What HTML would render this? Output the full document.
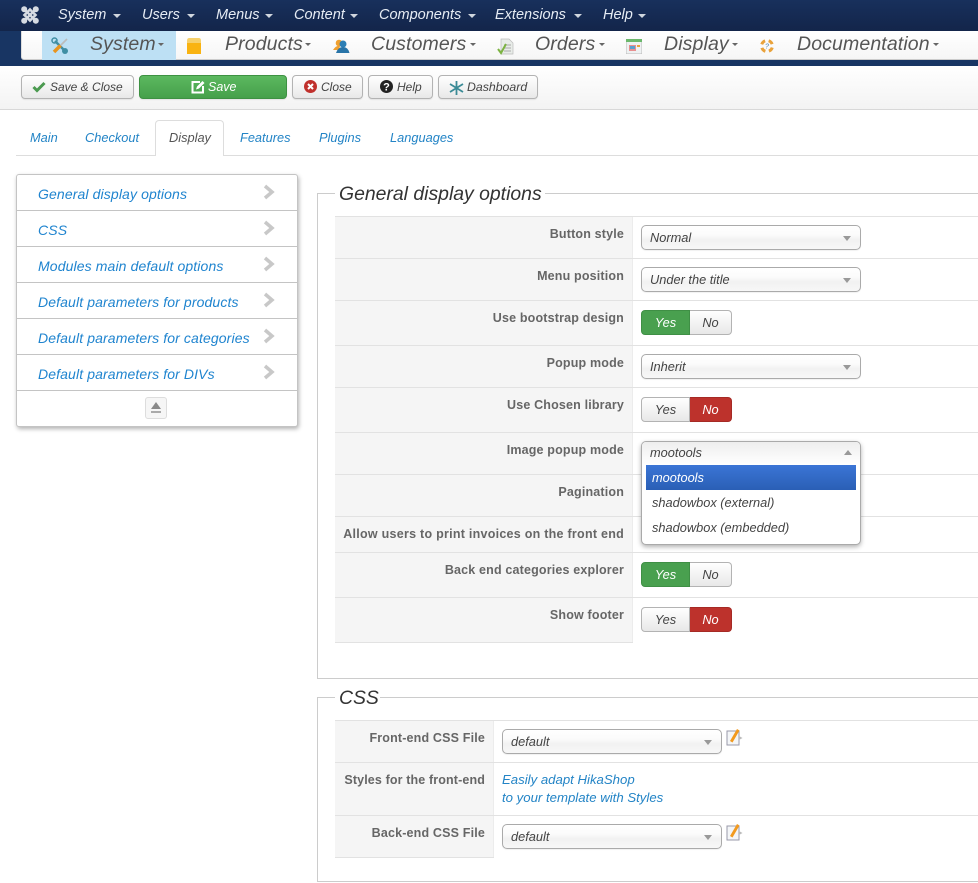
<!DOCTYPE html>
<html><head><meta charset="utf-8"><title>Display</title>
<style>
*{box-sizing:border-box}
html,body{margin:0;padding:0;background:#fff}
body{width:978px;height:883px;position:relative;overflow:hidden;font-family:"Liberation Sans",Arial,sans-serif;font-style:italic;color:#333}
.a{position:absolute;white-space:nowrap}
.tn{top:7px;font-size:14.5px;line-height:17px;color:#e6ecf4}
.car{position:absolute;width:0;height:0;border-left:4px solid transparent;border-right:4px solid transparent;border-top:4px solid #d0d6de}
.sn{top:33px;font-size:19.5px;line-height:22px;color:#555;letter-spacing:.12px}
.scar{position:absolute;top:43px;width:0;height:0;border-left:3.5px solid transparent;border-right:3.5px solid transparent;border-top:3.5px solid #666}
.btn{top:75px;height:24px;border:1px solid #b3b3b3;border-radius:4px;background:linear-gradient(#fff,#e8e8e8);font-size:12px;line-height:22px;color:#444;box-shadow:0 1px 1px rgba(0,0,0,.08)}
.tab{top:130px;font-size:12.8px;line-height:15px;color:#2384c6}
.pl{left:38px;font-size:14px;line-height:16px;color:#1f84cf;letter-spacing:.12px}
.hl{left:17px;width:280px;height:1px;background:#c4c4c4}
.lbl{background:#f5f5f5;left:335px;width:298px}
.r{left:335px;width:643px;height:1px;background:#e2e2e2}
.t{font-weight:bold;font-style:normal;font-size:12.5px;line-height:15px;color:#666;text-align:right;letter-spacing:.17px}
.sel{left:641px;width:220px;height:25px;border:1px solid #aaa;border-radius:5px;background:linear-gradient(#fff 0%,#fbfbfb 40%,#f1f1f1 60%,#f7f7f7 100%);font-size:12.8px;line-height:24px;padding-left:8px;color:#444;box-shadow:0 1px 1px rgba(0,0,0,.06)}
.sel:after{content:"";position:absolute;right:9px;top:10px;border-left:4px solid transparent;border-right:4px solid transparent;border-top:5px solid #999}
.y,.n{height:25px;top:0;font-size:12.8px;line-height:24px;text-align:center;border:1px solid #b3b3b3;position:absolute}
.tg{position:absolute;left:641px;width:91px;height:25px}
.y{left:0;width:49px;border-radius:4px 0 0 4px}
.n{left:49px;width:42px;border-radius:0 4px 4px 0;border-left:0}
.off{background:linear-gradient(#fff,#e8e8e8);color:#444}
.gr{background:#49a04f;border-color:#3f8f45;color:#fff}
.rd{background:#bd322c;border-color:#a52a25;color:#fff}
.opt{left:652px;font-size:12.8px;line-height:15px;color:#444}
</style></head><body>

<div class="a" style="left:0;top:0;width:978px;height:31px;background:linear-gradient(#18305c,#13254a)"></div>
<svg class="a" style="left:20px;top:5px" width="20" height="20" viewBox="0 0 20 20"><g fill="none" stroke="#d6dbe2" stroke-width="2.600"><path d="M4 4 L16 16"/><path d="M16 4 L4 16"/><path d="M10 4.500 L15.500 10 L10 15.500 L4.500 10Z"/></g><g fill="#d6dbe2"><circle cx="4.200" cy="4.200" r="3"/><circle cx="15.800" cy="4.200" r="3"/><circle cx="4.200" cy="15.800" r="3"/><circle cx="15.800" cy="15.800" r="3"/></g></svg>
<div class="a tn" style="left:58px">System</div><div class="car" style="left:113px;top:14px"></div>
<div class="a tn" style="left:142px">Users</div><div class="car" style="left:187px;top:14px"></div>
<div class="a tn" style="left:216px">Menus</div><div class="car" style="left:265px;top:14px"></div>
<div class="a tn" style="left:294px">Content</div><div class="car" style="left:350px;top:14px"></div>
<div class="a tn" style="left:379px">Components</div><div class="car" style="left:468px;top:14px"></div>
<div class="a tn" style="left:495px">Extensions</div><div class="car" style="left:574px;top:14px"></div>
<div class="a tn" style="left:603px">Help</div><div class="car" style="left:638px;top:14px"></div>

<div class="a" style="left:0;top:31px;width:978px;height:35px;background:#183563"></div>
<div class="a" style="left:21px;top:31px;width:957px;height:29px;background:linear-gradient(#fff,#f6f6f6);border-bottom:1px solid #ccc;border-left:1px solid #ddd;border-bottom-left-radius:3px"></div>
<div class="a" style="left:42px;top:31px;width:134px;height:29px;background:#bde0f4"></div>
<svg class="a" style="left:51px;top:37px" width="18" height="18" viewBox="0 0 18 18"><path d="M4 4 L14 14" stroke="#3f8ea3" stroke-width="2.400"/><circle cx="14" cy="14" r="3" fill="#3f8ea3"/><circle cx="3.500" cy="3.500" r="2.500" fill="none" stroke="#3f8ea3" stroke-width="1.500"/><path d="M16 2 L9.500 8.500" stroke="#bbb" stroke-width="1.800"/><path d="M9.500 8.500 L3 15" stroke="#e8941f" stroke-width="3.500"/></svg>
<div class="a sn" style="left:90px">System</div><div class="scar" style="left:158px"></div>
<svg class="a" style="left:186px;top:37px" width="16" height="17" viewBox="0 0 16 17"><path d="M1 4 Q1 1 3 1 H13 Q15 1 15 4 V6 H1Z" fill="#f6d06a"/><rect x="1" y="6" width="14" height="11" fill="#f9b311"/></svg>
<div class="a sn" style="left:225px">Products</div><div class="scar" style="left:305px"></div>
<svg class="a" style="left:333px;top:38px" width="17" height="16" viewBox="0 0 17 16"><circle cx="6" cy="5" r="3.300" fill="#f0a030"/><path d="M0 12 Q3 7 7 8 L6 12Z" fill="#f0a030"/><circle cx="10" cy="6" r="3.500" fill="#2d7fb5"/><path d="M3 15 Q5 9 10 9 Q15 9 16.500 15Z" fill="#2874a8"/></svg>
<div class="a sn" style="left:371px">Customers</div><div class="scar" style="left:470px"></div>
<svg class="a" style="left:497px;top:38px" width="17" height="17" viewBox="0 0 17 17"><path d="M4 1 H12 L16 5 V16 H4Z" fill="#e8ece8" stroke="#bbb" stroke-width=".7"/><path d="M7 7H14M7 10H14M7 13H14" stroke="#aaa"/><path d="M1 11 L4 15 L9 6" fill="none" stroke="#7cb342" stroke-width="2"/></svg>
<div class="a sn" style="left:535px">Orders</div><div class="scar" style="left:599px"></div>
<svg class="a" style="left:626px;top:39px" width="16" height="15" viewBox="0 0 16 15"><rect width="16" height="15" fill="#eef1f2" stroke="#bbb"/><rect width="16" height="3" fill="#6cb86c"/><rect x="3" y="6" width="7" height="6" fill="#e89090"/><rect x="4" y="7" width="5" height="3" fill="#5a9fcf"/><rect x="11" y="6" width="3" height="2" fill="#e9a23b"/></svg>
<div class="a sn" style="left:664px">Display</div><div class="scar" style="left:732px"></div>
<svg class="a" style="left:759px;top:38px" width="16" height="16" viewBox="0 0 16 16"><circle cx="8" cy="8" r="5.500" fill="none" stroke="#e9a23b" stroke-width="3" stroke-dasharray="5 3.600" transform="rotate(17 8 8)"/><text x="8" y="10.500" font-size="7" font-family="Liberation Sans" text-anchor="middle" fill="#4a7fb0">?</text></svg>
<div class="a sn" style="left:797px">Documentation</div><div class="scar" style="left:933px"></div>

<div class="a" style="left:0;top:66px;width:978px;height:44px;background:linear-gradient(#fff,#f3f3f3);border-bottom:1px solid #d8d8d8"></div>
<div class="a btn" style="left:21px;width:113px"><svg class="a" style="left:10px;top:5px" width="14" height="12" viewBox="0 0 14 12"><path d="M1.500 6 L5 9.500 L12.500 2" fill="none" stroke="#4b9a50" stroke-width="3"/></svg><span class="a" style="left:28px;top:0">Save &amp; Close</span></div>
<div class="a btn" style="left:139px;width:148px;background:linear-gradient(#5cb85f,#46a04b);border-color:#3d9142;color:#fff"><svg class="a" style="left:51px;top:4px" width="14" height="14" viewBox="0 0 14 14"><path d="M9 2H1.500V12.500H12V6" fill="none" stroke="#fff" stroke-width="2"/><path d="M5 9.500 L6 6.500 L11.500 1 L13.500 3 L8 8.500Z" fill="#fff"/></svg><span class="a" style="left:68px;top:0;font-size:12.5px">Save</span></div>
<div class="a btn" style="left:292px;width:71px"><svg class="a" style="left:11px;top:4px" width="13" height="13" viewBox="0 0 13 13"><circle cx="6.500" cy="6.500" r="6.500" fill="#c0302c"/><path d="M4 4 L9 9 M9 4 L4 9" stroke="#fff" stroke-width="2"/></svg><span class="a" style="left:28px;top:0">Close</span></div>
<div class="a btn" style="left:368px;width:65px"><svg class="a" style="left:11px;top:4px" width="13" height="13" viewBox="0 0 13 13"><circle cx="6.500" cy="6.500" r="6.500" fill="#222"/><text x="6.500" y="10.500" font-size="11" font-weight="bold" font-style="normal" font-family="Liberation Sans" text-anchor="middle" fill="#fff">?</text></svg><span class="a" style="left:28px;top:0">Help</span></div>
<div class="a btn" style="left:438px;width:100px"><svg class="a" style="left:10px;top:4px" width="15" height="16" viewBox="0 0 15 16"><path d="M7.500 1V15M1 4 L14 12M14 4 L1 12" stroke="#3b8b96" stroke-width="1.800"/></svg><span class="a" style="left:28px;top:0;font-size:12.3px">Dashboard</span></div>

<div class="a" style="left:16px;top:155px;width:962px;height:1px;background:#ddd"></div>
<div class="a" style="left:155px;top:120px;width:69px;height:36px;background:#fff;border:1px solid #ddd;border-bottom:0;border-radius:4px 4px 0 0"></div>
<div class="a tab" style="left:30px">Main</div>
<div class="a tab" style="left:85px">Checkout</div>
<div class="a tab" style="left:169px;color:#555">Display</div>
<div class="a tab" style="left:240px">Features</div>
<div class="a tab" style="left:319px">Plugins</div>
<div class="a tab" style="left:390px">Languages</div>

<div class="a" style="left:16px;top:174px;width:282px;height:253px;border:1px solid #c4c4c4;border-radius:3px;box-shadow:1px 2px 4px rgba(0,0,0,.3);background:#fff"></div>
<div class="a hl" style="top:210px"></div><div class="a hl" style="top:246px"></div><div class="a hl" style="top:282px"></div><div class="a hl" style="top:318px"></div><div class="a hl" style="top:354px"></div><div class="a hl" style="top:390px"></div>
<div class="a pl" style="top:186px">General display options</div>
<div class="a pl" style="top:222px">CSS</div>
<div class="a pl" style="top:258px">Modules main default options</div>
<div class="a pl" style="top:294px">Default parameters for products</div>
<div class="a pl" style="top:330px">Default parameters for categories</div>
<div class="a pl" style="top:366px">Default parameters for DIVs</div>
<svg class="a" style="left:263px;top:184px" width="12" height="16" viewBox="0 0 12 16"><path d="M2 2 L9 8 L2 14" fill="none" stroke="#c8c8c8" stroke-width="3.500"/></svg>
<svg class="a" style="left:263px;top:220px" width="12" height="16" viewBox="0 0 12 16"><path d="M2 2 L9 8 L2 14" fill="none" stroke="#c8c8c8" stroke-width="3.500"/></svg>
<svg class="a" style="left:263px;top:256px" width="12" height="16" viewBox="0 0 12 16"><path d="M2 2 L9 8 L2 14" fill="none" stroke="#c8c8c8" stroke-width="3.500"/></svg>
<svg class="a" style="left:263px;top:292px" width="12" height="16" viewBox="0 0 12 16"><path d="M2 2 L9 8 L2 14" fill="none" stroke="#c8c8c8" stroke-width="3.500"/></svg>
<svg class="a" style="left:263px;top:328px" width="12" height="16" viewBox="0 0 12 16"><path d="M2 2 L9 8 L2 14" fill="none" stroke="#c8c8c8" stroke-width="3.500"/></svg>
<svg class="a" style="left:263px;top:364px" width="12" height="16" viewBox="0 0 12 16"><path d="M2 2 L9 8 L2 14" fill="none" stroke="#c8c8c8" stroke-width="3.500"/></svg>
<div class="a" style="left:145px;top:397px;width:22px;height:22px;border:1px solid #ddd;border-radius:3px;background:#f6f6f6"></div>
<svg class="a" style="left:150px;top:401px" width="12" height="14" viewBox="0 0 12 14"><path d="M6 1 L11 8 H1Z" fill="#8a8a8a"/><rect x="1" y="10" width="10" height="2" fill="#aaa"/></svg>

<!-- Fieldset 1 -->
<div class="a" style="left:317px;top:193px;width:661px;height:486px;border:1px solid #ccc;border-right:0"></div>
<div class="a" style="left:335px;top:180px;width:210px;height:26px;background:#fff"></div>
<div class="a" style="left:339px;top:182px;font-size:19.4px;line-height:24px;color:#333">General display options</div>

<div class="a lbl" style="top:216px;height:427px"></div>
<div class="a" style="left:632px;top:216px;width:1px;height:427px;background:#ececec"></div>
<div class="a r" style="top:216px"></div><div class="a r" style="top:258px"></div><div class="a r" style="top:300px"></div><div class="a r" style="top:345px"></div><div class="a r" style="top:387px"></div><div class="a r" style="top:432px"></div><div class="a r" style="top:474px"></div><div class="a r" style="top:516px"></div><div class="a r" style="top:552px"></div><div class="a r" style="top:597px"></div><div class="a r" style="top:642px;width:298px"></div>

<div class="a t" style="right:354px;top:227px">Button style</div>
<div class="a t" style="right:354px;top:269px">Menu position</div>
<div class="a t" style="right:354px;top:311px">Use bootstrap design</div>
<div class="a t" style="right:354px;top:356px">Popup mode</div>
<div class="a t" style="right:354px;top:398px">Use Chosen library</div>
<div class="a t" style="right:354px;top:443px">Image popup mode</div>
<div class="a t" style="right:354px;top:485px">Pagination</div>
<div class="a t" style="right:354px;top:527px;letter-spacing:.26px">Allow users to print invoices on the front end</div>
<div class="a t" style="right:354px;top:563px">Back end categories explorer</div>
<div class="a t" style="right:354px;top:608px">Show footer</div>

<div class="a sel" style="top:225px">Normal</div>
<div class="a sel" style="top:267px">Under the title</div>
<div class="tg" style="top:310px"><div class="y gr">Yes</div><div class="n off">No</div></div>
<div class="a sel" style="top:354px">Inherit</div>
<div class="tg" style="top:397px"><div class="y off">Yes</div><div class="n rd">No</div></div>

<div class="a" style="left:641px;top:441px;width:220px;height:104px;border:1px solid #aaa;border-radius:5px;background:#fff;box-shadow:0 2px 5px rgba(0,0,0,.3)"></div>
<div class="a" style="left:642px;top:442px;width:218px;height:23px;border-radius:4px 4px 0 0;background:linear-gradient(#eee,#fff);font-size:12.8px;line-height:22px;padding-left:8px;color:#444">mootools</div>
<div class="a" style="left:844px;top:450px;width:0;height:0;border-left:4px solid transparent;border-right:4px solid transparent;border-bottom:5px solid #999"></div>
<div class="a" style="left:646px;top:465px;width:210px;height:25px;background:linear-gradient(#3b75d6,#2a5fb5)"></div>
<div class="a opt" style="top:470px;color:#fff">mootools</div>
<div class="a opt" style="top:495px">shadowbox (external)</div>
<div class="a opt" style="top:520px">shadowbox (embedded)</div>

<div class="tg" style="top:562px"><div class="y gr">Yes</div><div class="n off">No</div></div>
<div class="tg" style="top:607px"><div class="y off">Yes</div><div class="n rd">No</div></div>

<!-- Fieldset 2 -->
<div class="a" style="left:317px;top:697px;width:661px;height:185px;border:1px solid #ccc;border-right:0"></div>
<div class="a" style="left:335px;top:685px;width:45px;height:24px;background:#fff"></div>
<div class="a" style="left:339px;top:686px;font-size:19.4px;line-height:24px;color:#333">CSS</div>

<div class="a lbl" style="top:720px;height:138px;width:159px"></div>
<div class="a" style="left:493px;top:720px;width:1px;height:138px;background:#ececec"></div>
<div class="a r" style="top:720px"></div><div class="a r" style="top:762px"></div><div class="a r" style="top:815px"></div><div class="a r" style="top:857px;width:159px"></div>
<div class="a t" style="right:493px;top:731px">Front-end CSS File</div>
<div class="a t" style="right:493px;top:773px;letter-spacing:.13px">Styles for the front-end</div>
<div class="a t" style="right:493px;top:826px">Back-end CSS File</div>
<div class="a sel" style="left:502px;top:729px">default</div>
<div class="a sel" style="left:502px;top:824px">default</div>
<div class="a" style="left:502px;top:771px;font-size:13.2px;line-height:18px;color:#2384c6">Easily adapt HikaShop<br>to your template with Styles</div>
<svg class="a" style="left:726px;top:728px" width="17" height="18" viewBox="0 0 17 18"><rect x="1" y="3" width="12" height="14" fill="#f4f6f8" stroke="#99a"/><path d="M4 13 L11 1 L13.500 2.500 L6.500 14.500Z" fill="#f29a1f"/><path d="M13 8 L16.500 10 L13 12Z" fill="#bbb"/></svg>
<svg class="a" style="left:726px;top:823px" width="17" height="18" viewBox="0 0 17 18"><rect x="1" y="3" width="12" height="14" fill="#f4f6f8" stroke="#99a"/><path d="M4 13 L11 1 L13.500 2.500 L6.500 14.500Z" fill="#f29a1f"/><path d="M13 8 L16.500 10 L13 12Z" fill="#bbb"/></svg>
</body></html>
